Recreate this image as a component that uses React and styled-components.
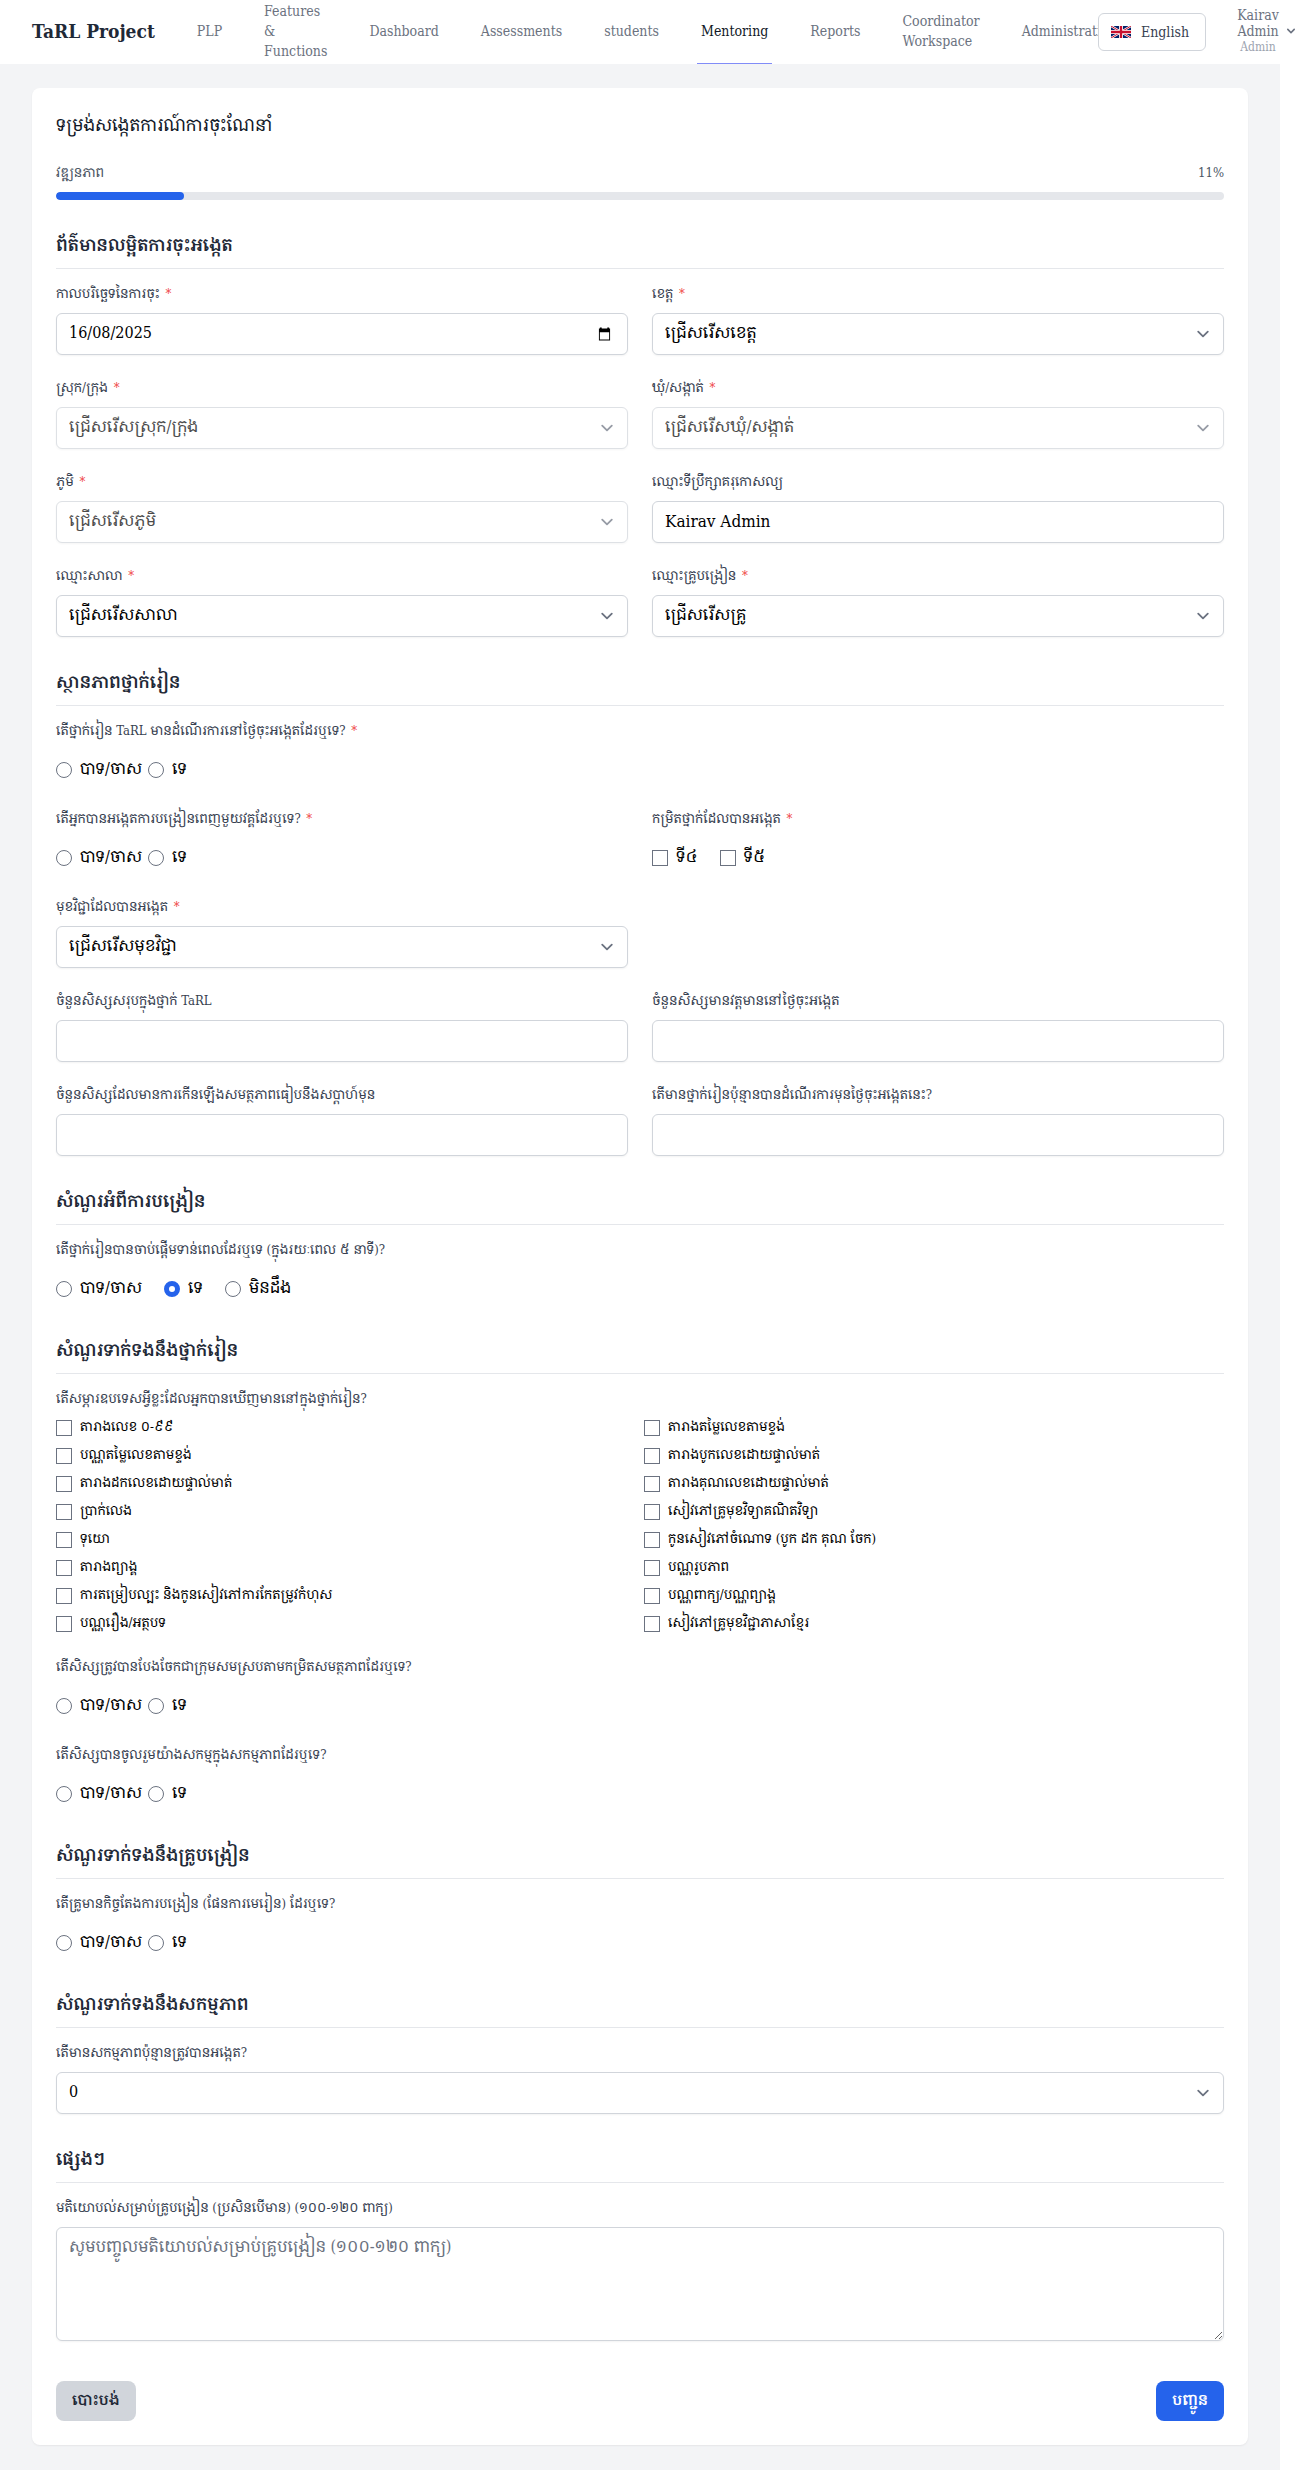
import React from "react";
import styled, { createGlobalStyle, css } from "styled-components";

const GlobalStyle = createGlobalStyle`
  *, *::before, *::after { box-sizing: border-box; }
  body {
    margin: 0;
    background: #ffffff;
    color: #000000;
    font-family: "DejaVu Serif Condensed", "Noto Serif Khmer", "Noto Sans Khmer", "DejaVu Serif", serif;
    font-size: 16px;
    line-height: 24px;
  }
  button, input, select, textarea { font: inherit; color: inherit; margin: 0; }
`;

const Page = styled.div`
  display: flex;
  flex-direction: column;
  min-height: 100vh;
`;

const Header = styled.header`
  display: flex;
  align-items: center;
  height: 64px;
  padding-left: 32px;
  background: #ffffff;
`;

const Logo = styled.a`
  flex: none;
  padding-bottom: 2px;
  color: #1f2937;
  font-size: 19px;
  font-weight: 700;
  line-height: 28px;
  text-decoration: none;
`;

const Nav = styled.nav`
  display: flex;
  flex: 1;
  align-self: stretch;
  gap: 34px;
  min-width: 0;
  margin-left: 38px;
`;

const NavLink = styled.a`
  display: flex;
  flex: none;
  align-items: center;
  width: min-content;
  height: 65px;
  padding: 0 4px 2px;
  border-bottom: 2px solid ${(p) => (p.$active ? "#818cf8" : "transparent")};
  color: ${(p) => (p.$active ? "#111827" : "#6b7280")};
  font-size: 14px;
  line-height: 20px;
  text-decoration: none;
`;

const HeaderTools = styled.div`
  display: flex;
  flex: none;
  align-items: center;
  gap: 20px;
  position: relative;
`;

const LanguageButton = styled.button`
  display: flex;
  align-items: center;
  gap: 10px;
  height: 38px;
  padding: 0 16px 0 12px;
  border: 1px solid #d1d5db;
  border-radius: 6px;
  background: #ffffff;
  color: #374151;
  font-size: 14px;
  line-height: 20px;
`;

const UserButton = styled.button`
  display: flex;
  align-items: center;
  justify-content: center;
  gap: 4px;
  width: 88px;
  height: 64px;
  padding: 0 12px 2px 8px;
  border: 0;
  background: #ffffff;
  color: #6b7280;
  font-size: 14px;
  line-height: 16px;

  svg {
    flex: none;
  }
`;

const UserName = styled.span`
  width: min-content;
`;

const UserRole = styled.span`
  display: block;
  color: #9ca3af;
  font-size: 12px;
  line-height: 16px;
`;

const Main = styled.main`
  flex: 1;
  margin-right: 34px;
  padding: 24px 32px;
  background: #f3f4f6;
`;

const Card = styled.form`
  display: flex;
  flex-direction: column;
  gap: 32px;
  padding: 24px;
  border-radius: 8px;
  background: #ffffff;
  box-shadow: 0 1px 2px rgba(0, 0, 0, 0.06);
`;

const Intro = styled.div`
  display: flex;
  flex-direction: column;
  gap: 24px;
`;

const Title = styled.h1`
  margin: 0;
  padding-bottom: 2px;
  color: #111827;
  font-size: 17px;
  font-weight: 400;
  line-height: 26px;
`;

const ProgressText = styled.div`
  display: flex;
  justify-content: space-between;
  margin-bottom: 10px;
  color: #4b5563;
  font-size: 13px;
  line-height: 18px;
`;

const Track = styled.div`
  height: 8px;
  overflow: hidden;
  border-radius: 4px;
  background: #e5e7eb;
`;

const Fill = styled.div`
  height: 100%;
  border-radius: 4px;
  background: #2563eb;
`;

const SectionBox = styled.section`
  display: flex;
  flex-direction: column;
  gap: 16px;
`;

const SectionTitle = styled.h2`
  margin: 0;
  padding-bottom: 10px;
  border-bottom: 1px solid #e5e7eb;
  color: #1f2937;
  font-size: 17px;
  font-weight: 600;
  line-height: 26px;
`;

const Fields = styled.div`
  display: grid;
  grid-template-columns: repeat(2, minmax(0, 1fr));
  gap: 24px;
`;

const FieldBox = styled.div`
  display: flex;
  flex-direction: column;
  gap: 8px;
  min-width: 0;
  ${(p) => p.$wide && "grid-column: 1 / -1;"}
`;

const labelText = css`
  padding-bottom: 2px;
  color: #374151;
  font-size: 13px;
  line-height: 18px;
  white-space: nowrap;
`;

const Label = styled.label`
  ${labelText}
`;

const GroupLabel = styled.span`
  ${labelText}
`;

const Star = styled.span`
  margin-left: 2px;
  color: #ef4444;
`;

const control = css`
  width: 100%;
  border: 1px solid #d1d5db;
  border-radius: 6px;
  background: #ffffff;
  box-shadow: 0 1px 2px rgba(0, 0, 0, 0.05);
`;

const Input = styled.input`
  ${control}
  height: 42px;
  padding: 6px 12px 8px;
  font-size: 17px;
`;

const DateBox = styled.div`
  ${control}
  display: flex;
  align-items: center;
  height: 42px;
  padding: 0 12px;
`;

const DateInput = styled.input`
  flex: 1;
  min-width: 0;
  padding: 0 0 2px;
  border: 0;
  background: transparent;
`;

const CalendarButton = styled.button`
  display: flex;
  padding: 0 4px;
  border: 0;
  background: transparent;
  color: #000000;
`;

const SelectBox = styled.div`
  position: relative;
  opacity: ${(p) => (p.$disabled ? 0.7 : 1)};

  svg {
    position: absolute;
    top: 9px;
    right: 9px;
    pointer-events: none;
  }
`;

const Select = styled.select`
  ${control}
  display: block;
  height: 42px;
  padding: 7px 40px 9px 12px;
  appearance: none;
  opacity: 1;
`;

const TextArea = styled.textarea`
  ${control}
  display: block;
  height: 114px;
  padding: 7px 12px;

  &::placeholder {
    color: #6b7280;
    opacity: 1;
  }
`;

const Choices = styled.div`
  display: flex;
  gap: ${(p) => (p.$spaced ? 22 : 6)}px;
  padding: 8px 0 4px;
`;

const Checklist = styled.div`
  display: grid;
  grid-template-columns: repeat(2, minmax(0, 1fr));
  gap: 8px;
`;

const ChoiceLabel = styled.label`
  display: flex;
  align-items: center;
  gap: 8px;
  font-size: ${(p) => (p.$small ? 13 : 16)}px;
  line-height: ${(p) => (p.$small ? 20 : 24)}px;
  white-space: nowrap;
`;

const ChoiceText = styled.span`
  margin: -1px 0 1px;
`;

const Tick = styled.input`
  flex: none;
  width: 16px;
  height: 16px;
  border: 1px solid #6b7280;
  border-radius: ${(p) => (p.type === "radio" ? "50%" : "0")};
  background: #ffffff;
  appearance: none;

  &:checked {
    border: 5px solid #2563eb;
  }
`;

const Actions = styled.div`
  display: flex;
  justify-content: space-between;
  padding-top: 8px;
`;

const ActionButton = styled.button`
  height: 40px;
  padding: 0 16px 2px;
  border: 0;
  border-radius: 8px;
  background: ${(p) => (p.$primary ? "#2563eb" : "#d1d5db")};
  color: ${(p) => (p.$primary ? "#ffffff" : "#1f2937")};
  font-size: 15px;
  font-weight: 600;
`;

const navItems = [
  "PLP",
  "Features & Functions",
  "Dashboard",
  "Assessments",
  "students",
  "Mentoring",
  "Reports",
  "Coordinator Workspace",
  "Administration",
];

const materials = [
  "តារាងលេខ ០-៩៩",
  "តារាងតម្លៃលេខតាមខ្ទង់",
  "បណ្ណតម្លៃលេខតាមខ្ទង់",
  "តារាងបូកលេខដោយផ្ទាល់មាត់",
  "តារាងដកលេខដោយផ្ទាល់មាត់",
  "តារាងគុណលេខដោយផ្ទាល់មាត់",
  "ប្រាក់លេង",
  "សៀវភៅគ្រូមុខវិទ្យាគណិតវិទ្យា",
  "ទុយោ",
  "កូនសៀវភៅចំណោទ (បូក ដក គុណ ចែក)",
  "តារាងព្យាង្គ",
  "បណ្ណរូបភាព",
  "ការតម្រៀបល្បះ និងកូនសៀវភៅការកែតម្រូវកំហុស",
  "បណ្ណពាក្យ/បណ្ណព្យាង្គ",
  "បណ្ណរឿង/អត្ថបទ",
  "សៀវភៅគ្រូមុខវិជ្ជាភាសាខ្មែរ",
];

const yesNo = ["បាទ/ចាស", "ទេ"];

function Flag() {
  return (
    <svg width="20" height="12" viewBox="0 0 60 36" aria-hidden="true">
      <rect width="60" height="36" fill="#012169" />
      <path d="M0 0l60 36M60 0L0 36" stroke="#fff" strokeWidth="7" />
      <path d="M0 0l60 36M60 0L0 36" stroke="#c8102e" strokeWidth="3" />
      <path d="M30 0v36M0 18h60" stroke="#fff" strokeWidth="12" />
      <path d="M30 0v36M0 18h60" stroke="#c8102e" strokeWidth="7" />
    </svg>
  );
}

function UserChevron() {
  return (
    <svg width="16" height="16" viewBox="0 0 20 20" fill="currentColor" aria-hidden="true">
      <path
        fillRule="evenodd"
        clipRule="evenodd"
        d="M5.293 7.293a1 1 0 011.414 0L10 10.586l3.293-3.293a1 1 0 111.414 1.414l-4 4a1 1 0 01-1.414 0l-4-4a1 1 0 010-1.414z"
      />
    </svg>
  );
}

function SelectChevron() {
  return (
    <svg width="24" height="24" viewBox="0 0 20 20" fill="none" aria-hidden="true">
      <path d="M6 8l4 4 4-4" stroke="#6b7280" strokeWidth="1.5" strokeLinecap="round" strokeLinejoin="round" />
    </svg>
  );
}

function CalendarIcon() {
  return (
    <svg width="13" height="14" viewBox="0 0 14 14" aria-hidden="true">
      <path fill="currentColor" fillRule="evenodd" d="M2 0h2v1h6V0h2v1h1v13H1V1h1zM2 5v8h10V5z" />
    </svg>
  );
}

function Required({ when }) {
  return when ? <Star> *</Star> : null;
}

function TextField({ id, label, value }) {
  return (
    <FieldBox>
      <Label htmlFor={id}>{label}</Label>
      <Input id={id} type="text" defaultValue={value} />
    </FieldBox>
  );
}

function SelectField({ id, label, option, required, disabled, wide }) {
  return (
    <FieldBox $wide={wide}>
      <Label htmlFor={id}>
        {label}
        <Required when={required} />
      </Label>
      <SelectBox $disabled={disabled}>
        <Select id={id} disabled={disabled}>
          <option>{option}</option>
        </Select>
        <SelectChevron />
      </SelectBox>
    </FieldBox>
  );
}

function ChoiceField({ id, label, options, type = "radio", required, spaced, wide, selected }) {
  return (
    <FieldBox $wide={wide} role="group" aria-labelledby={id}>
      <GroupLabel id={id}>
        {label}
        <Required when={required} />
      </GroupLabel>
      <Choices $spaced={spaced}>
        {options.map((option) => (
          <ChoiceLabel key={option}>
            <Tick type={type} name={id} defaultChecked={option === selected} />
            <ChoiceText>{option}</ChoiceText>
          </ChoiceLabel>
        ))}
      </Choices>
    </FieldBox>
  );
}

function Section({ title, children }) {
  return (
    <SectionBox>
      <SectionTitle>{title}</SectionTitle>
      <Fields>{children}</Fields>
    </SectionBox>
  );
}

export default function App() {
  const progress = 11;
  return (
    <Page>
      <GlobalStyle />
      <Header>
        <Logo href="#home">TaRL Project</Logo>
        <Nav>
          {navItems.map((item) => (
            <NavLink key={item} href={`#${item.toLowerCase().replace(/\W+/g, "-")}`} $active={item === "Mentoring"}>
              {item}
            </NavLink>
          ))}
        </Nav>
        <HeaderTools>
          <LanguageButton type="button">
            <Flag />
            English
          </LanguageButton>
          <UserButton type="button">
            <UserName>
              Kairav Admin
              <UserRole>Admin</UserRole>
            </UserName>
            <UserChevron />
          </UserButton>
        </HeaderTools>
      </Header>
      <Main>
        <Card onSubmit={(event) => event.preventDefault()}>
          <Intro>
            <Title>ទម្រង់សង្កេតការណ៍ការចុះណែនាំ</Title>
            <div>
              <ProgressText>
                <span>វឌ្ឍនភាព</span>
                <span>{progress}%</span>
              </ProgressText>
              <Track>
                <Fill style={{ width: `${progress}%` }} />
              </Track>
            </div>
          </Intro>

          <Section title="ព័ត៌មានលម្អិតការចុះអង្កេត">
            <FieldBox>
              <Label htmlFor="visit-date">
                កាលបរិច្ឆេទនៃការចុះ
                <Required when />
              </Label>
              <DateBox>
                <DateInput id="visit-date" type="text" inputMode="numeric" defaultValue="16/08/2025" />
                <CalendarButton type="button" aria-label="ប្រតិទិន">
                  <CalendarIcon />
                </CalendarButton>
              </DateBox>
            </FieldBox>
            <SelectField id="province" label="ខេត្ត" option="ជ្រើសរើសខេត្ត" required />
            <SelectField id="district" label="ស្រុក/ក្រុង" option="ជ្រើសរើសស្រុក/ក្រុង" required disabled />
            <SelectField id="commune" label="ឃុំ/សង្កាត់" option="ជ្រើសរើសឃុំ/សង្កាត់" required disabled />
            <SelectField id="village" label="ភូមិ" option="ជ្រើសរើសភូមិ" required disabled />
            <TextField id="mentor" label="ឈ្មោះទីប្រឹក្សាគរុកោសល្យ" value="Kairav Admin" />
            <SelectField id="school" label="ឈ្មោះសាលា" option="ជ្រើសរើសសាលា" required />
            <SelectField id="teacher" label="ឈ្មោះគ្រូបង្រៀន" option="ជ្រើសរើសគ្រូ" required />
          </Section>

          <Section title="ស្ថានភាពថ្នាក់រៀន">
            <ChoiceField
              id="in-session"
              label="តើថ្នាក់រៀន TaRL មានដំណើរការនៅថ្ងៃចុះអង្កេតដែរឬទេ?"
              options={yesNo}
              required
              wide
            />
            <ChoiceField
              id="full-session"
              label="តើអ្នកបានអង្កេតការបង្រៀនពេញមួយវគ្គដែរឬទេ?"
              options={yesNo}
              required
            />
            <ChoiceField
              id="grades"
              type="checkbox"
              label="កម្រិតថ្នាក់ដែលបានអង្កេត"
              options={["ទី៤", "ទី៥"]}
              required
              spaced
            />
            <SelectField id="subject" label="មុខវិជ្ជាដែលបានអង្កេត" option="ជ្រើសរើសមុខវិជ្ជា" required />
            <span />
            <TextField id="total" label="ចំនួនសិស្សសរុបក្នុងថ្នាក់ TaRL" />
            <TextField id="present" label="ចំនួនសិស្សមានវត្តមាននៅថ្ងៃចុះអង្កេត" />
            <TextField id="improved" label="ចំនួនសិស្សដែលមានការកើនឡើងសមត្ថភាពធៀបនឹងសប្ដាហ៍មុន" />
            <TextField id="classes" label="តើមានថ្នាក់រៀនប៉ុន្មានបានដំណើរការមុនថ្ងៃចុះអង្កេតនេះ?" />
          </Section>

          <Section title="សំណួរអំពីការបង្រៀន">
            <ChoiceField
              id="on-time"
              label="តើថ្នាក់រៀនបានចាប់ផ្តើមទាន់ពេលដែរឬទេ (ក្នុងរយៈពេល ៥ នាទី)?"
              options={[...yesNo, "មិនដឹង"]}
              selected="ទេ"
              spaced
              wide
            />
          </Section>

          <Section title="សំណួរទាក់ទងនឹងថ្នាក់រៀន">
            <FieldBox $wide role="group" aria-labelledby="materials">
              <GroupLabel id="materials">តើសម្ភារឧបទេសអ្វីខ្លះដែលអ្នកបានឃើញមាននៅក្នុងថ្នាក់រៀន?</GroupLabel>
              <Checklist>
                {materials.map((item) => (
                  <ChoiceLabel key={item} $small>
                    <Tick type="checkbox" name="materials" />
                    <ChoiceText>{item}</ChoiceText>
                  </ChoiceLabel>
                ))}
              </Checklist>
            </FieldBox>
            <ChoiceField
              id="grouped"
              label="តើសិស្សត្រូវបានបែងចែកជាក្រុមសមស្របតាមកម្រិតសមត្ថភាពដែរឬទេ?"
              options={yesNo}
              wide
            />
            <ChoiceField
              id="active"
              label="តើសិស្សបានចូលរួមយ៉ាងសកម្មក្នុងសកម្មភាពដែរឬទេ?"
              options={yesNo}
              wide
            />
          </Section>

          <Section title="សំណួរទាក់ទងនឹងគ្រូបង្រៀន">
            <ChoiceField
              id="plan"
              label="តើគ្រូមានកិច្ចតែងការបង្រៀន (ផែនការមេរៀន) ដែរឬទេ?"
              options={yesNo}
              wide
            />
          </Section>

          <Section title="សំណួរទាក់ទងនឹងសកម្មភាព">
            <SelectField id="activities" label="តើមានសកម្មភាពប៉ុន្មានត្រូវបានអង្កេត?" option="0" wide />
          </Section>

          <Section title="ផ្សេងៗ">
            <FieldBox $wide>
              <Label htmlFor="comments">មតិយោបល់សម្រាប់គ្រូបង្រៀន (ប្រសិនបើមាន) (១០០-១២០ ពាក្យ)</Label>
              <TextArea id="comments" placeholder="សូមបញ្ចូលមតិយោបល់សម្រាប់គ្រូបង្រៀន (១០០-១២០ ពាក្យ)" />
            </FieldBox>
          </Section>

          <Actions>
            <ActionButton type="button">បោះបង់</ActionButton>
            <ActionButton type="submit" $primary>
              បញ្ជូន
            </ActionButton>
          </Actions>
        </Card>
      </Main>
    </Page>
  );
}
